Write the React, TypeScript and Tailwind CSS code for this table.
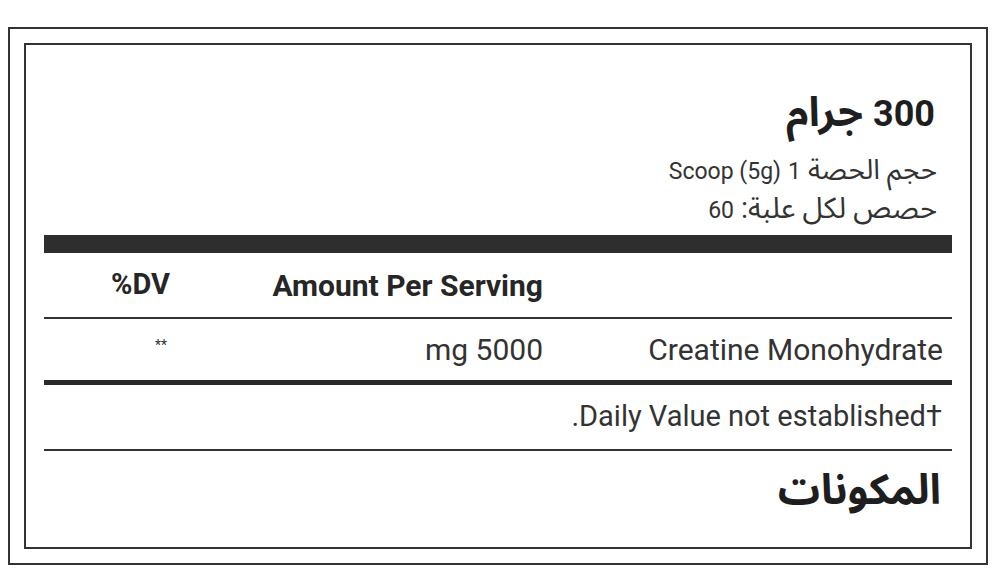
import React from "react";

const font = { fontFamily: '"Roboto", "Noto Sans Arabic", "Noto Naskh Arabic", "DejaVu Sans", sans-serif' };

export default function App() {
  return (
    <div className="w-[1000px] h-[582px] bg-white pt-[27px] pl-[8px] pr-[12px] pb-[17px]" style={font}>
      <div className="h-full border-2 border-[#333] p-[14px]">
        <div dir="rtl" className="h-full border-2 border-[#333] pl-[18px] pr-[18px] flex flex-col text-[#2b2b2b]">
          <div dir="ltr" className="mt-[45px] mb-[17px] pr-[17px] flex justify-end items-baseline gap-[10px] h-[44px] leading-[44px] font-bold text-[#1e1e1e]">
            <span className="text-[41px]">جرام</span>
            <span className="text-[36px]">300</span>
          </div>
          <div dir="ltr" className="pr-[15px] flex justify-end items-baseline gap-[7px] h-[38px] leading-[38px] text-[#333]">
            <span className="text-[23px]">Scoop (5g)</span>
            <span className="text-[23px]">1</span>
            <span className="text-[28px]">حجم الحصة</span>
          </div>
          <div dir="ltr" className="pr-[15px] flex justify-end items-baseline gap-[7px] h-[38px] leading-[38px] text-[#333]">
            <span className="text-[23px]">60</span>
            <span dir="rtl" className="text-[29px]">حصص لكل علبة:</span>
          </div>
          <div className="mt-[8px] h-[18px] bg-[#2e2e2e]" />
          <div className="grid grid-cols-[400px_303px_1fr] h-[64px] items-center text-[30px] font-bold text-[#262626]">
            <div />
            <div className="pr-[9px]">Amount Per Serving</div>
            <div className="pr-[79px] text-[29px]">DV%</div>
          </div>
          <div className="h-[2px] bg-[#333]" />
          <div className="grid grid-cols-[400px_303px_1fr] h-[61px] items-center text-[30px] text-[#333]">
            <div className="pr-[9px]">Creatine Monohydrate</div>
            <div className="pr-[9px]">5000 mg</div>
            <div className="pr-[82px] text-[14px] pb-[8px]">**</div>
          </div>
          <div className="h-[5px] bg-[#2a2a2a]" />
          <div className="h-[64px] flex items-center pr-[10px] text-[29px] text-[#333]">†Daily Value not established.</div>
          <div className="h-[2px] bg-[#333]" />
          <div className="pt-[17px] pr-[11px] text-[42px] leading-[44px] font-bold text-[#1e1e1e]">المكونات</div>
        </div>
      </div>
    </div>
  );
}
